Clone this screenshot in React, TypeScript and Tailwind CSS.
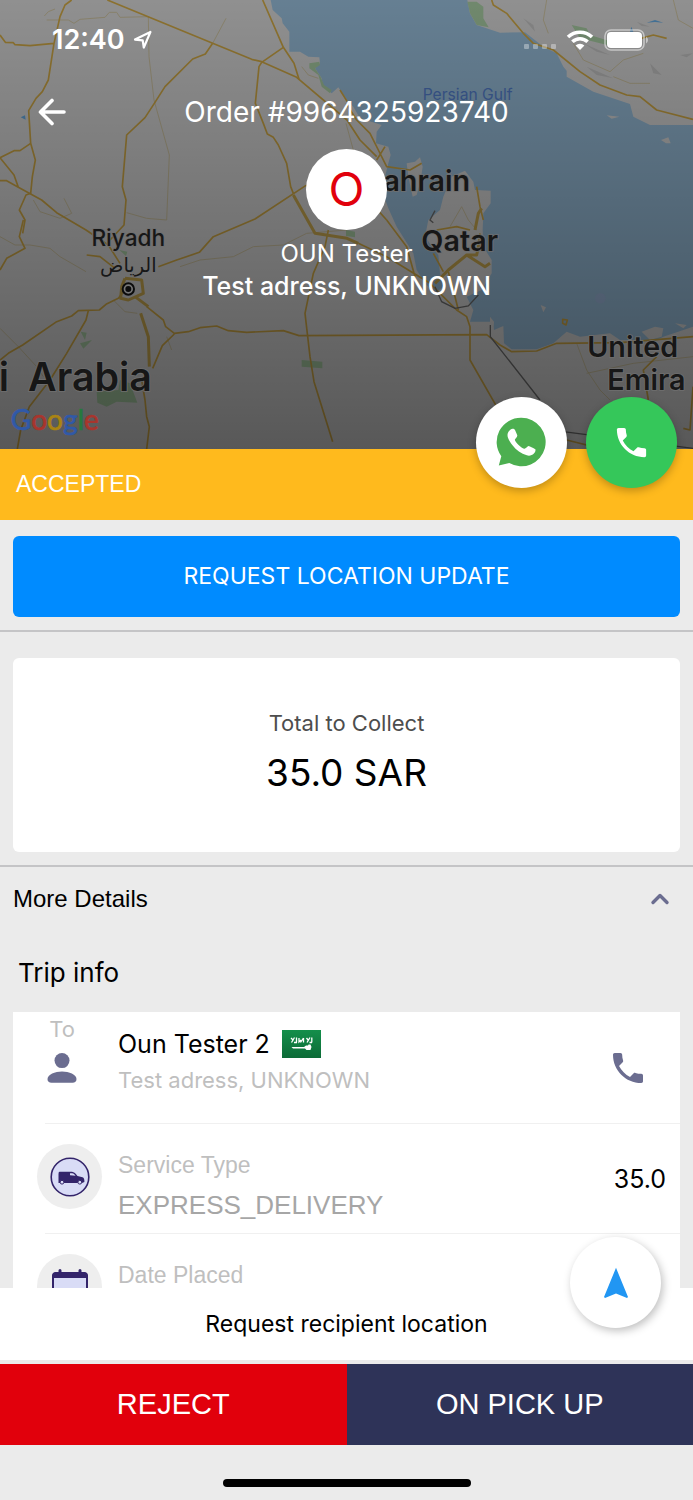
import type { ReactNode } from "react"
import { MdPhone } from "react-icons/md"

const SANS = "font-[Inter,'Noto_Sans',sans-serif]"
const HELV = "font-['Liberation_Sans',Arial,sans-serif]"

function MapBackground() {
  return (
    <svg
      className="absolute inset-0 size-full"
      viewBox="0 0 2079 1347"
      preserveAspectRatio="xMidYMin slice"
      fill="none"
      aria-hidden="true"
    >
      <defs>
        <linearGradient id="shade" x1="0" y1="0" x2="0" y2="1">
          <stop offset="0" stopColor="#000" stopOpacity="0.38" />
          <stop offset="1" stopColor="#000" stopOpacity="0.62" />
        </linearGradient>
      </defs>
      <rect width="2079" height="1347" fill="#e8e8e8" />

      {/* Gulf */}
      <path
        fill="#a4cdec"
        d="M812 0 L818 30 L845 55 L848 70 L868 95 L868 155 L900 155 L925 170 L958 172 L960 190 L945 205 L965 235 L968 255 L995 280 L1015 262 L1041 300 L1060 320 L1080 355 L1145 375 L1130 395 L1128 430 L1165 440 L1172 465 L1165 490 L1155 530 L1145 570 L1165 625 L1190 680 L1215 720 L1240 760 L1250 810 L1275 850 L1305 880 L1330 860 L1320 820 L1315 765 L1275 710 L1285 660 L1320 630 L1330 590 L1355 530 L1395 512 L1420 545 L1425 570 L1472 572 L1472 610 L1450 640 L1448 690 L1450 740 L1475 780 L1475 820 L1445 870 L1400 890 L1420 930 L1410 965 L1475 965 L1482 990 L1510 978 L1512 1030 L1535 1048 L1610 1048 L1660 1030 L1700 995 L1740 1010 L1830 1000 L1860 1020 L1920 1020 L1960 1025 L1990 1010 L2079 980 L2079 375 L1950 375 L1900 350 L1890 312 L1780 275 L1700 230 L1700 212 L1690 200 L1670 160 L1630 140 L1575 97 L1500 98 L1430 75 L1410 40 L1402 0 Z"
      />
      {/* islands and inlets */}
      <g fill="#e8e8e8">
        <path d="M1220 490 L1245 485 L1260 472 L1268 500 L1262 540 L1250 585 L1238 590 L1225 530 Z" />
        <path d="M1820 346 L1858 350 L1835 356 Z M1983 420 L2005 412 L2012 430 L1998 430 Z" />
        <path d="M1925 995 L1965 980 L1990 985 L1985 1010 L1950 1020 Z M2025 970 L2060 975 L2050 985 Z" />
        <path d="M1622 915 L1638 922 L1630 937 Z M1470 950 L1482 965 L1480 1000 L1470 990 Z" />
      </g>
      <circle cx="1801" cy="895" r="16" fill="#b3c6f5" opacity="0.5" />

      {/* parks */}
      <g fill="#b5dcb0">
        <path d="M928 190 L958 185 L960 195 L945 205 L962 230 L972 255 L995 270 L990 280 L965 260 L955 225 L928 205 Z" />
        <path d="M1402 5 L1430 5 L1450 20 L1450 55 L1466 82 L1430 75 L1410 40 Z" />
        <path d="M1715 75 L1760 85 L1770 105 L1850 130 L1850 142 L1800 130 L1740 115 Z" />
        <path d="M290 1175 L355 1170 L360 1140 L390 1150 L412 1208 L350 1205 L320 1220 L292 1208 Z" />
        <path d="M905 1080 L967 1085 L967 1105 L905 1100 Z M242 995 L260 998 L255 1020 Z M240 1030 L276 1020 L250 1046 Z M358 750 L382 755 L378 768 Z" />
        <path d="M1038 690 L1065 695 L1065 712 L1038 708 Z" />
      </g>
      <g fill="#6db7f2">
        <path d="M62 352 L75 346 L77 359 Z M1940 68 L1965 60 L1990 68 L1965 66 Z M1890 95 L1894 80 L1900 95 Z" />
      </g>
      <g fill="#d3d3d3">
        <path d="M1570 55 L1600 75 L1605 95 Z M1750 130 L1830 165 L1790 155 Z M1910 65 L1950 80 L1925 78 Z M1950 190 L1985 225 L1960 220 Z M2040 165 L2078 160 L2060 172 Z M1760 200 L1840 235 L1790 225 Z" />
      </g>

      {/* minor roads */}
      <g stroke="#d9c996" strokeWidth="3" opacity="0.7">
        <path d="M140 60 L205 60 L222 70 L240 58 L315 52 L328 37 L350 37 L360 52 L445 50 L447 170 L462 300 L508 465 L500 660 L440 655 L380 638 M678 55 L638 130 M133 48 L145 35 L165 27" />
        <path d="M0 710 L45 735 L90 735 L150 745 L180 770 L258 815 M540 800 L600 780 L700 770 L760 740 L850 735 L920 700 L1041 690 M100 600 L120 635 L180 655 L215 640 L192 595" />
        <path d="M0 985 L55 1040 L110 1100 L130 1130 M340 900 L375 935 L412 940 M500 1010 L515 1050" />
        <path d="M1730 1030 L1760 1110 L1800 1170 L1830 1200 M1760 1120 L1900 1090 L2079 1070 M1640 0 L1630 60 L1645 100 M1720 130 L1750 180 L1830 215 L1870 180 L1930 160 M2020 0 L2035 60 L2079 85 M1840 230 L1890 250 L1950 250" />
        <path d="M1385 620 L1405 660 L1430 690 M1385 620 L1350 680 M1038 370 L1060 450 M905 200 L925 225 L955 235" />
      </g>

      {/* highways */}
      <g stroke="#e0b64c" strokeWidth="5" strokeLinejoin="round">
        <path d="M0 105 L16 127 L40 128 L45 134 L90 137 L162 130 L180 50 L195 15 L215 0 M162 130 L145 240 L127 275 L108 295 L86 332 L92 430 L106 480 L97 530 L92 580 L78 585 L58 630 L75 660 L68 700" />
        <path d="M92 430 L60 452 L42 452 L0 473 L42 525 L55 562 M0 542 L20 542 L55 562 L92 582 L125 600 L170 638 L258 690 L325 735 L360 790" />
        <path d="M322 0 L638 130 L755 178 L785 185 L890 232 L897 238 L1041 360 L1080 420 L1130 470" />
        <path d="M638 130 L616 162 L578 177 L495 260 L463 310 L435 353 L380 405 L367 560 L378 600 L372 675 L330 720" />
        <path d="M788 0 L850 142 L882 190 L897 238 M850 142 L785 187 L777 200 L766 310 L790 370 L802 402 L820 412 L835 435 L860 490 L872 560 L880 580" />
        <path d="M1041 510 L917 557 L765 657 L640 710 L598 757 L530 780 L475 800 M985 690 L975 740 L940 820 L915 940 L930 1070 L942 1145 L998 1325" />
        <path d="M0 810 L20 775 L75 745 L58 710 L70 660 M0 1080 L25 1060 L68 1035 L170 965 L215 948 L235 932 L298 930 L318 913 L355 895 L375 870" />
        <path d="M265 932 L258 960 L200 1060 L150 1140 L88 1220 L62 1290 L52 1347" />
        <path d="M260 765 L300 770 L345 805 M440 920 L490 960 L497 980 L523 1000 L565 995 L600 983 L650 978 L685 992 L740 997 L850 992 L897 1007 L1460 1004 L1500 1035 L1535 1055 L1610 1053 L1670 1030 L1860 1028 L2079 1010" />
        <path d="M523 1002 L487 1037 L458 1105 M425 1140 L435 1200 L440 1250 L448 1280 L440 1347" />
        <path d="M1160 660 L1220 740 L1245 830 M1075 730 L1160 770 L1290 850 L1370 930 L1400 950 L1410 980 L1410 1080 L1490 1220 M1700 1320 L1800 1345" />
        <path d="M1430 560 L1440 620 L1450 660 M1440 700 L1430 760 M1345 815 L1360 870 L1375 930 M1300 760 L1330 815 M1310 690 L1370 680 L1410 690" />
        <path d="M1475 0 L1480 15 L1520 40 L1570 100 L1600 130 L1660 150 L1740 215 L1800 255 L1880 285 L1920 290 L1970 330 L2079 358" />
        <path d="M1038 310 L1070 360 L1110 400 L1135 450 L1160 500 L1230 510 L1265 490 M1020 270 L1045 310 M1130 480 L1155 440 M1070 560 L1160 660 M1870 130 L1960 105 L2000 115 M1945 1200 L1930 1110 L1970 1070 M2079 1160 L2070 1290 L2050 1285" />
        <path d="M1688 958 L1702 960 L1698 975 L1688 970 Z" />
      </g>
      <g stroke="#d9b656" strokeWidth="9" strokeLinejoin="round">
        <path d="M880 585 L945 700 L1041 715 L1075 730 M422 940 L445 1010 L448 1100 M375 835 L365 860 L362 895 L385 900 L430 880 L425 840 L375 835 M405 890 L445 920" />
        <path d="M1425 690 L1435 640 L1445 625 M1305 850 L1345 810 L1400 765 L1430 765 L1440 720 M1400 765 L1455 800 L1470 790" />
      </g>

      {/* borders */}
      <path
        stroke="#777"
        strokeWidth="4"
        d="M1305 860 L1325 905 L1365 925 L1405 918 L1435 885 M1471 975 L1471 1010 L1620 1200 M1690 1295 L2079 1345 M1305 632 L1290 660 L1300 668"
      />

      <rect width="2079" height="1347" fill="url(#shade)" />

      {/* place names */}
      <g
        fontFamily="Inter, 'Noto Sans', sans-serif"
        fontWeight="600"
        fill="#171717"
        stroke="#6f6f6f"
        strokeWidth="5"
        paintOrder="stroke"
      >
        <text x="1268" y="301" fontSize="47" fontWeight="400" fill="#344f80" stroke="none">Persian Gulf</text>
        <text x="1410" y="573" fontSize="86" textAnchor="end">Bahrain</text>
        <text x="1379" y="752" fontSize="86" textAnchor="middle">Qatar</text>
        <text x="385" y="737" fontSize="68" fontWeight="500" textAnchor="middle">Riyadh</text>
        <text x="385" y="816" fontSize="58" fontWeight="400" textAnchor="middle" fontFamily="'DejaVu Sans', sans-serif" stroke="none">
          الرياض
        </text>
        <text x="-4" y="1174" fontSize="118">i</text>
        <text x="270" y="1174" fontSize="118" textAnchor="middle">Arabia</text>
        <text x="1898" y="1070" fontSize="86" textAnchor="middle">United</text>
        <text x="1822" y="1169" fontSize="86">Emira</text>
      </g>
      <circle cx="385" cy="867" r="17" stroke="#0c0c0c" strokeWidth="6" fill="#777" />
      <circle cx="385" cy="867" r="9" fill="#0c0c0c" />
      <text x="32" y="1290" fontSize="84" fontFamily="Lato, sans-serif" strokeWidth="2">
        <tspan fill="#3059a8" stroke="#3059a8">G</tspan>
        <tspan fill="#a8352d" stroke="#a8352d">o</tspan>
        <tspan fill="#aa8412" stroke="#aa8412">o</tspan>
        <tspan fill="#3059a8" stroke="#3059a8">g</tspan>
        <tspan fill="#267a3d" stroke="#267a3d">l</tspan>
        <tspan fill="#a8352d" stroke="#a8352d">e</tspan>
      </text>
    </svg>
  )
}

function StatusBar() {
  return (
    <div className="flex h-20 items-center justify-between pr-11 pl-13 text-white">
      <div className="flex items-center gap-2">
        <span className="text-[27px] leading-8 font-semibold">12:40</span>
        <svg width="20" height="20" viewBox="0 0 20 20" fill="none" aria-hidden="true">
          <path d="M2 9.6 L17.4 2 L10.8 17.6 L9.7 10.4 Z" stroke="currentColor" strokeWidth="2.2" strokeLinejoin="round" />
        </svg>
      </div>
      <div className="flex items-center gap-[10px]">
        <div className="flex gap-1 pt-3">
          {[0, 1, 2, 3].map((i) => (
            <span key={i} className="size-[5px] rounded-[1px] bg-white/35" />
          ))}
        </div>
        <svg width="28" height="20" viewBox="0 0 28 20" fill="none" aria-hidden="true">
          <path d="M2 7 A17.5 17.5 0 0 1 26 7" stroke="currentColor" strokeWidth="3.6" />
          <path d="M6.4 11.8 A11 11 0 0 1 21.6 11.8" stroke="currentColor" strokeWidth="3.6" />
          <path d="M14 20 L9.6 15.6 A6.4 6.4 0 0 1 18.4 15.6 Z" fill="currentColor" />
        </svg>
        <svg width="45" height="22" viewBox="0 0 45 22" fill="none" aria-hidden="true">
          <rect x="1" y="1" width="39" height="20" rx="6" stroke="#fff" strokeOpacity="0.5" strokeWidth="1.6" />
          <rect x="3" y="3" width="35" height="16" rx="4" fill="#fff" />
          <path d="M42 7.5 Q44 8.5 44 11 Q44 13.5 42 14.5 Z" fill="#fff" fillOpacity="0.5" />
        </svg>
      </div>
    </div>
  )
}

function Fab({ label, className, children }: { label: string; className: string; children: ReactNode }) {
  return (
    <button
      type="button"
      aria-label={label}
      className={`flex size-[91px] items-center justify-center rounded-full ${className}`}
    >
      {children}
    </button>
  )
}

function WhatsAppIcon() {
  return (
    <svg width="51" height="51" viewBox="0 0 51 51" aria-hidden="true">
      <path
        fill="#4caf50"
        d="M25.3 .7 A24.3 24.3 0 1 1 13.3 46.1 L2.8 48.6 L5.3 39.3 A24.3 24.3 0 0 1 25.3 .7 Z"
      />
      <path
        fill="#fff"
        d="M14.6 12.6 C15.8 11.4 18.2 11.5 19 13 L21.2 18 C21.8 19.6 19.4 21.6 18.9 22.6 C18.6 23.4 20.4 26 22.6 28.1 C25 30.4 27.6 32 28.6 31.8 C29.6 31.6 31.6 28.7 32.7 28.9 C33.5 29.1 38.7 31.6 39.3 32.2 C39.9 32.9 39.1 35.4 37.9 36.6 C36 38.5 33.2 39.1 30.8 38.3 C25.2 36.7 20.2 33.3 16.5 28.2 C13.8 24.6 11.3 21.2 11.5 17.7 C11.6 15.8 12.8 13.8 14.6 12.6 Z"
      />
    </svg>
  )
}

function SaudiFlag() {
  return (
    <svg width="39" height="28" viewBox="0 0 39 28" role="img" aria-label="Saudi Arabia">
      <defs>
        <linearGradient id="flag" x1="0" y1="0" x2="0" y2="1">
          <stop offset="0" stopColor="#148f4b" />
          <stop offset="1" stopColor="#0c6b37" />
        </linearGradient>
      </defs>
      <rect width="39" height="28" fill="url(#flag)" />
      <path
        d="M9 8 L11.5 10.5 M12.5 7.5 L9.5 12.5 M14.5 7.5 V12.5 M12 12.5 H15 M17 8 V12 L19 10 M21.5 8 L18.5 12.5 M21.5 8 V12.5 M24.5 8 L26.5 10.5 M28 7.5 L25 12.5 M29.8 7.5 V12.5 M27.5 12.5 H30"
        stroke="#fff"
        strokeWidth="1.3"
        fill="none"
      />
      <path d="M9.5 17 H22 L24 15.5 H26 L26.5 14.5 H28.5 L29.5 17 L28.5 20 H24.5 L23 18.5 H11 Z" fill="#fff" />
    </svg>
  )
}

function PersonIcon() {
  return (
    <svg width="30" height="30" viewBox="0 0 30 30" fill="#6b6d90" aria-hidden="true">
      <circle cx="15" cy="7.6" r="7.5" />
      <path d="M15 18.4 C22 18.4 29.5 21.5 29.5 26 C29.5 28.6 28 29.8 25.5 29.8 H4.5 C2 29.8 .5 28.6 .5 26 C.5 21.5 8 18.4 15 18.4 Z" />
    </svg>
  )
}

function VanIcon() {
  return (
    <svg width="40" height="40" viewBox="0 0 40 40" aria-hidden="true">
      <circle cx="20" cy="20" r="18.8" fill="#d9dcf6" stroke="#33246a" strokeWidth="1.6" />
      <path
        fill="#33246a"
        d="M9.5 14.8 H22 C24 14.8 26 17 27.5 19 L32.5 20.3 C34 20.8 34.4 22 34.4 25 L32 26 H8.5 V17 Q8.5 14.8 9.5 14.8 Z"
      />
      <path fill="#d9dcf6" d="M20 16.2 H22 C23.5 16.2 24.8 17.6 25.6 18.8 L20 18.2 Z" />
      <circle cx="12" cy="25.2" r="1.9" fill="#d9dcf6" stroke="#33246a" strokeWidth="1" />
      <circle cx="29.8" cy="25.2" r="1.9" fill="#d9dcf6" stroke="#33246a" strokeWidth="1" />
    </svg>
  )
}

function CalendarIcon() {
  return (
    <svg width="36" height="36" viewBox="0 0 36 36" aria-hidden="true">
      <rect x="1" y="4" width="34" height="31" rx="4" fill="#d9dcf6" stroke="#33246a" strokeWidth="2" />
      <path d="M0 9 V7 Q0 3 4 3 H32 Q36 3 36 7 V9 Z" fill="#33246a" />
      <path d="M8 1.5 V5 M28 1.5 V5" stroke="#33246a" strokeWidth="3" strokeLinecap="round" />
    </svg>
  )
}

function DetailRow({ icon, label, value, amount }: { icon: ReactNode; label: string; value?: string; amount?: string }) {
  return (
    <div className="flex h-[109px] shrink-0 pr-[14px] pl-6">
      <div className="mt-5 flex size-[65px] shrink-0 items-center justify-center rounded-full bg-[#eee]">{icon}</div>
      <div className={`flex-1 pt-[23px] pl-4 ${HELV}`}>
        <p className="text-[23px] leading-9 text-[#bfbfbf]">{label}</p>
        {value && <p className="pt-1 text-[26px] leading-9 text-[#a6a6a6]">{value}</p>}
      </div>
      {amount && <p className="self-center text-[25px] leading-8 text-black">{amount}</p>}
    </div>
  )
}

export default function App() {
  return (
    <div className={`flex h-screen flex-col bg-[#ebebeb] text-black ${SANS}`}>
      <header className="relative h-[449px] shrink-0 overflow-hidden text-white">
        <MapBackground />
        <div className="relative">
          <StatusBar />
          <div className="grid h-16 grid-cols-[104px_1fr_104px] items-center">
            <button type="button" aria-label="Back" className="justify-self-center">
              <svg width="28" height="28" viewBox="0 0 28 28" fill="none" aria-hidden="true">
                <path
                  d="M14 2.5 L2.5 14 L14 25.5 M3 14 H26"
                  stroke="currentColor"
                  strokeWidth="3.6"
                  strokeLinecap="round"
                  strokeLinejoin="round"
                />
              </svg>
            </button>
            <h1 className="text-center text-[28px] leading-8 whitespace-nowrap">Order #9964325923740</h1>
          </div>
          <div className="flex flex-col items-center pt-[5px]">
            <div className="flex size-[81px] items-center justify-center rounded-full bg-white text-[47px] text-[#e1000c]">
              O
            </div>
            <p className="pt-2 text-[24px] leading-8">OUN Tester</p>
            <p className="text-[25px] leading-8 font-medium">Test adress, UNKNOWN</p>
          </div>
        </div>
      </header>

      <main className="flex min-h-0 flex-1 flex-col">
        <div className="relative flex h-[71px] shrink-0 items-center bg-[#ffba1d] px-4">
          <span className={`text-[23px] text-white ${HELV}`}>ACCEPTED</span>
          <div className="absolute -top-[52px] right-4 flex gap-[19px]">
            <Fab label="WhatsApp" className="bg-white shadow-[0_3px_8px_rgba(0,0,0,0.25)]">
              <WhatsAppIcon />
            </Fab>
            <Fab label="Call" className="bg-[#35c75a] shadow-[0_3px_8px_rgba(0,0,0,0.25)]">
              <MdPhone size={39} color="#fff" />
            </Fab>
          </div>
        </div>

        <div className="shrink-0 border-b-2 border-[#c4c4c6] px-[13px] pt-4 pb-[13px]">
          <button type="button" className="h-[81px] w-full rounded-md bg-[#008bff] text-[23px] text-white">
            REQUEST LOCATION UPDATE
          </button>
        </div>

        <div className="shrink-0 border-b-2 border-[#c4c4c6] px-[13px] pt-[26px] pb-[13px]">
          <div className="flex h-[194px] flex-col items-center justify-center gap-3 rounded-md bg-white pb-2">
            <p className="text-[22px] leading-8 text-[#4d4d4d]">Total to Collect</p>
            <p className="text-[37px] leading-11">35.0 SAR</p>
          </div>
        </div>

        <button
          type="button"
          aria-expanded="true"
          className={`flex h-16 shrink-0 items-center justify-between px-[13px] text-[24px] ${HELV}`}
        >
          More Details
          <svg width="40" height="24" viewBox="0 0 40 24" fill="none" aria-hidden="true">
            <path d="M13 15.5 L20 8.5 L27 15.5" stroke="#6b6d90" strokeWidth="3.4" strokeLinecap="round" strokeLinejoin="round" />
          </svg>
        </button>

        <h2 className="h-[81px] shrink-0 px-[18px] pt-6 text-[26px] leading-9">Trip info</h2>

        <section className="mx-[13px] flex min-h-0 flex-1 flex-col overflow-hidden bg-white">
          <div className="flex h-[111px] shrink-0 pr-8 pl-8">
            <div className="flex w-[34px] shrink-0 flex-col items-center pt-px">
              <span className="pb-2 text-[22px] leading-8 text-[#bfbfbf]">To</span>
              <PersonIcon />
            </div>
            <div className="flex-1 pt-4 pl-[39px]">
              <p className="flex items-center gap-3 text-[25px] leading-8">
                Oun Tester 2 <SaudiFlag />
              </p>
              <p className="pt-1 text-[22px] leading-8 text-[#bfbfbf]">Test adress, UNKNOWN</p>
            </div>
            <button type="button" aria-label="Call recipient" className="self-center">
              <MdPhone size={40} color="#6b6d90" />
            </button>
          </div>
          <hr className="ml-8 shrink-0 border-[#f0f0f0]" />
          <DetailRow icon={<VanIcon />} label="Service Type" value="EXPRESS_DELIVERY" amount="35.0" />
          <hr className="ml-8 shrink-0 border-[#f0f0f0]" />
          <DetailRow icon={<CalendarIcon />} label="Date Placed" />
        </section>
      </main>

      <footer className="relative shrink-0">
        <button type="button" className="mb-1 h-[72px] w-full bg-white text-[23px]">
          Request recipient location
        </button>
        <div className="absolute -top-[51px] right-8">
          <Fab label="Navigate" className="bg-white shadow-[2px_3px_9px_rgba(0,0,0,0.25)]">
            <svg width="26" height="32" viewBox="0 0 26 32" aria-hidden="true">
              <path d="M13 .8 L25 30 L24 31 L13 26.4 L2 31 L1 30 Z" fill="#2196f3" />
            </svg>
          </Fab>
        </div>
        <div className={`grid h-[81px] grid-cols-2 text-[29px] text-white ${HELV}`}>
          <button type="button" className="bg-[#e1000c]">
            REJECT
          </button>
          <button type="button" className="bg-[#2e3358]">
            ON PICK UP
          </button>
        </div>
        <div className="flex h-[55px] justify-center pt-[34px]">
          <div className="h-2 w-[248px] rounded-full bg-black" />
        </div>
      </footer>
    </div>
  )
}
